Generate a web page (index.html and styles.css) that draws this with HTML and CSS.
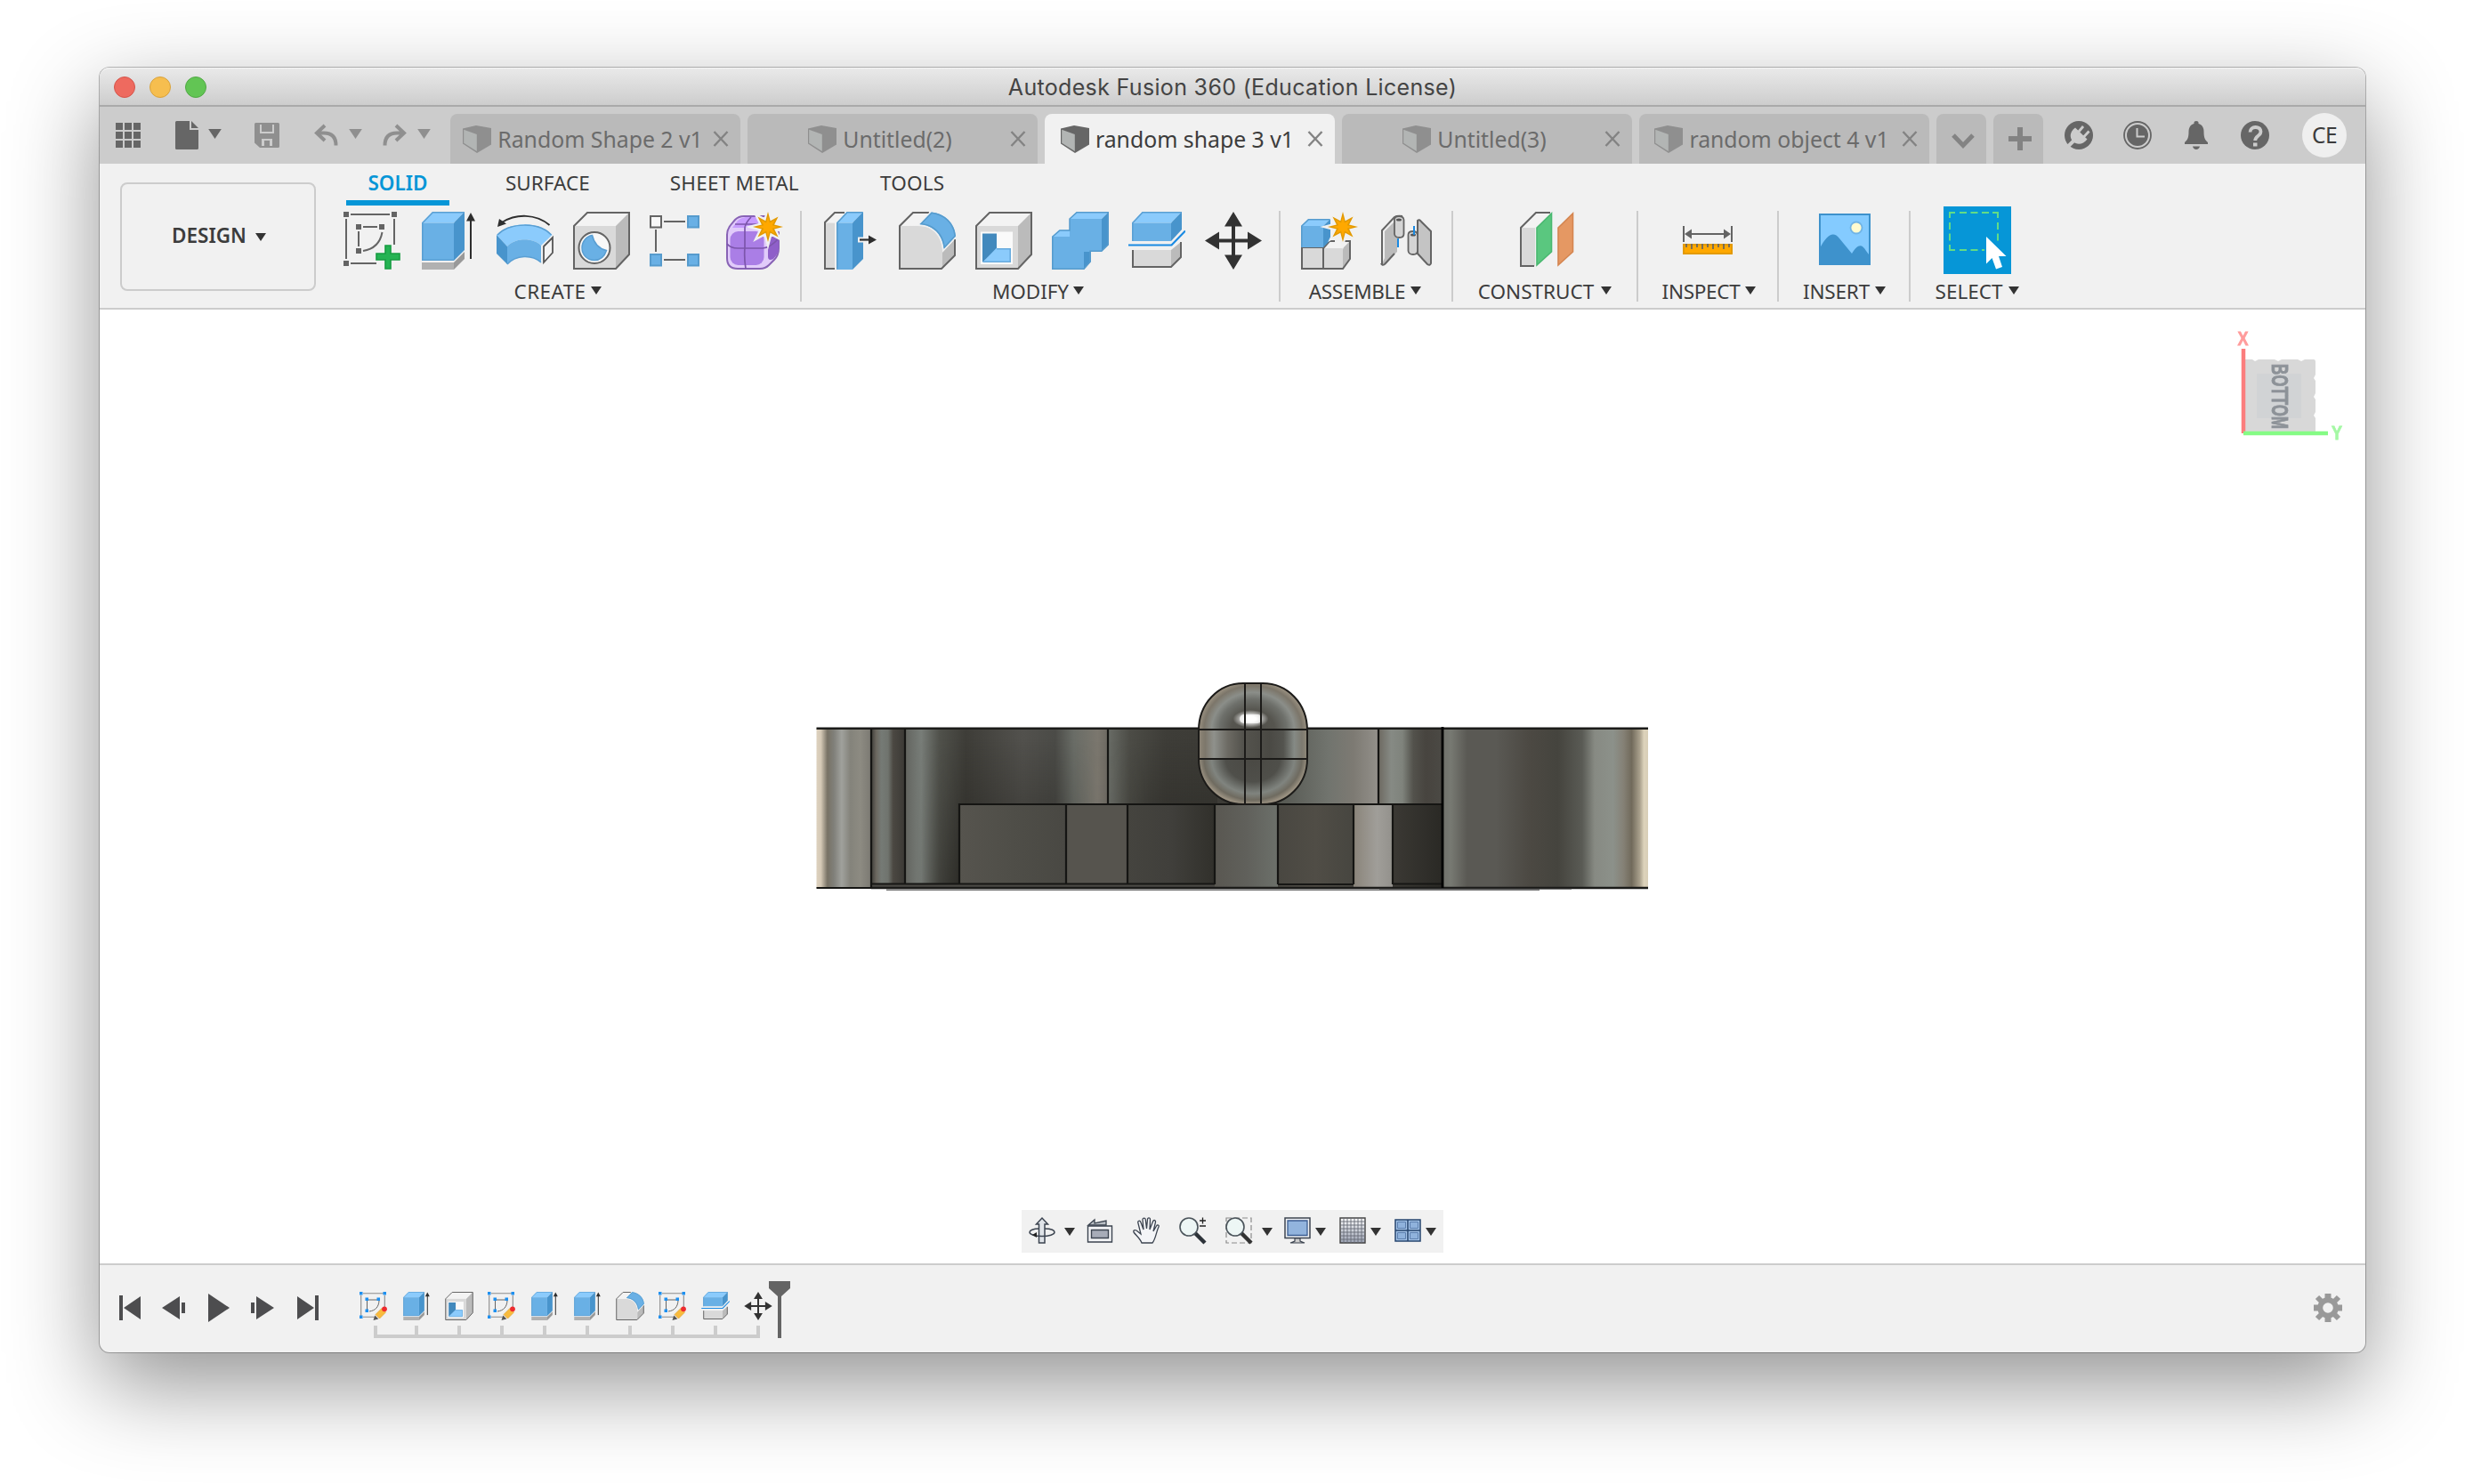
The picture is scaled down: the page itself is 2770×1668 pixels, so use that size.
FILE: index.html
```html
<!DOCTYPE html>
<html lang="en">
<head>
<meta charset="utf-8">
<title>Autodesk Fusion 360 (Education License)</title>
<link rel="stylesheet" href="styles.css">
</head>
<body>
<svg class="defs" width="0" height="0">
  <defs>
    <symbol id="caret" viewBox="0 0 12 9"><path d="M0 0h12L6 9z" fill="currentColor"/></symbol>
    <symbol id="doc-cube" viewBox="0 0 32 31">
      <path d="M0 3.500 15 0 32 3v18.500L16 31 0 20.500z" fill="currentColor"/>
      <path d="M1.200 4.800 15.800 10v19L1.200 19.800z" fill="#b2b5b4"/>
    </symbol>
    <symbol id="close" viewBox="0 0 18 18"><path d="M1.500 1 16.500 17M16.500 1 1.500 17" stroke="#838383" stroke-width="2.400" fill="none"/></symbol>
    <symbol id="extrude" viewBox="0 0 64 65">
      <path d="M2 57h36v8H2z" fill="#b1b1b1"/><path d="M38 57 50 45v8L38 65z" fill="#999"/>
      <path d="M2 12.500 14 0h36L38 12.500z" fill="#8bcbfc"/><path d="M38 12.500 50 0v43L38 55z" fill="#4894cc"/>
      <path d="M2 12.500h36V55H2z" fill="#69b0e5"/><path d="M2.800 55V12.500L14.300.8H50M2 54.200h36" fill="none" stroke="#5a9fd3" stroke-width="1.500"/>
      <path d="M57 7v46" stroke="#2e2e2e" stroke-width="2"/><path d="m57 1 5 9.500H52z" fill="#2e2e2e"/>
    </symbol>
    <symbol id="fillet" viewBox="0 0 64 65">
      <path d="M1 16 16 1h18L22 15z" fill="#f3f3f3"/><path d="M48 47 63 31v17L48 64z" fill="#bbb"/>
      <path d="M1 16h21c15 0 26 10 27 28v20H1z" fill="#d9d9d9"/>
      <path d="M34 1H16L1 16v48h47l15-15V31" fill="none" stroke="#646464" stroke-width="2"/>
      <path d="M23.500 14.300 36.500.5C52 2 63 13 64 27.500L50.500 41.500C49 25 38 15 23.500 14.300z" fill="#69b0e5" stroke="#f1f1f1" stroke-width="3" paint-order="stroke"/>
      <path d="M25 13.500 37 1.300C51 3 62 13 63.200 27.300L51.300 40C49 24 39 15 25 13.500z" fill="#69b0e5" stroke="#569bcd" stroke-width="1.500"/>
    </symbol>
    <symbol id="shell" viewBox="0 0 64 65">
      <path d="M1 16 16 1h47L48 16z" fill="#f3f3f3"/><path d="M48 16 63 1v47L48 64z" fill="#bbb"/><path d="M1 16h47v48H1z" fill="#d9d9d9"/>
      <path d="M1 16 16 1h47v47L48 64H1z" fill="none" stroke="#646464" stroke-width="2"/>
      <path d="M6 22.500h36V59H6z" fill="#fafafa"/><path d="M8 24.500h16v18L8 57z" fill="#4289bd"/>
      <path d="M8 57 23.500 41H40v16z" fill="#8bcbfc"/><path d="M9 56.200h30.200V41.800H24" fill="none" stroke="#67aadd" stroke-width="1.500"/>
    </symbol>
    <symbol id="split" viewBox="0 0 64 65">
      <path d="M4 12.500 15.500 0H60L48 12.500z" fill="#8bcbfc"/><path d="M48 12.500 60 0v20L48 33z" fill="#4894cc"/><path d="M4 12.500h44V33H4z" fill="#69b0e5"/>
      <path d="M4.800 33V12.500L16 .8h44" fill="none" stroke="#5a9fd3" stroke-width="1.500"/>
      <path d="M0 37.500h48.500L64 21.500" fill="none" stroke="#1a8ae2" stroke-width="2.200"/>
      <path d="M5 43h43v19H5z" fill="#d9d9d9"/><path d="m48 43 11-9v17L48 62z" fill="#bbb"/><path d="M5 43v19h43l11-11V34" fill="none" stroke="#646464" stroke-width="2"/>
    </symbol>
    <symbol id="move" viewBox="0 0 64 65">
      <path d="M32 10v46M10 32.500h44" stroke="#323232" stroke-width="4"/>
      <path d="m32 0 10 16.500H22zM32 65l10-16.500H22zM0 32.500l16-10v20zM64 32.500l-16-10v20z" fill="#323232"/>
    </symbol>
    <symbol id="star" viewBox="0 0 34 36" overflow="visible">
      <path id="burst" d="M17 1l2.700 10.200 8.900-4.800-4.500 9L34 18l-9.900 2.600 4.500 9-8.900-4.800L17 35l-2.700-10.200-8.900 4.800 4.500-9L0 18l9.900-2.600-4.500-9 8.900 4.800z" fill="#f1f1f1" stroke="#f1f1f1" stroke-width="4.500"/>
      <path d="M17 1l2.700 10.200 8.900-4.800-4.500 9L34 18l-9.900 2.600 4.500 9-8.900-4.800L17 35l-2.700-10.200-8.900 4.800 4.500-9L0 18l9.900-2.600-4.500-9 8.900 4.800z" fill="#e39a00"/>
      <path d="M17 6.500l1.900 7 5.900-3.300-3 6 6.700 1.800-6.700 1.800 3 6-5.900-3.300-1.900 7-1.900-7-5.900 3.300 3-6L5.500 18l6.700-1.800-3-6 5.900 3.300z" fill="#ffa800"/>
    </symbol>
    <symbol id="sketch-edit" viewBox="0 0 32 32">
      <path d="M4 1.700h24M1.700 4v24M28.300 4v14M4 28.300h13" stroke="#8c8c8c" stroke-width="1.100"/>
      <path d="M9 9h12M8.500 10v11M22 10c-.5 7-4 11-11 12" fill="none" stroke="#646464" stroke-width="1"/>
      <path d="M0 0h3.500v3.500H0zM26.500 0H30v3.500h-3.500zM0 26.500h3.500V30H0zM6.500 6.500H10V10H6.500zM19.500 6.500H23V10h-3.500zM6.500 19.500H10V23H6.500z" fill="#1e90f0"/>
      <path d="m15.500 32 1.800-5.500 4 4z" fill="#555"/><path d="m18 25.500 7-7 4.500 4.500-7 7z" fill="#f9bb3d" stroke="#e0a030" stroke-width=".7"/><circle cx="28" cy="19.300" r="2.900" fill="#ee2b2f"/>
    </symbol>
  </defs>
</svg>

<div class="window">
  <header class="titlebar">
    <div class="lights"><i class="red"></i><i class="yellow"></i><i class="green"></i></div>
    <span class="title">Autodesk Fusion 360 (Education License)</span>
  </header>

  <div class="tabbar">
    <div class="quick">
      <svg class="q-grid" viewBox="0 0 28 28"><path d="M0 0h8v8H0zM10 0h8v8h-8zM20 0h8v8h-8zM0 10h8v8H0zM10 10h8v8h-8zM20 10h8v8h-8zM0 20h8v8H0zM10 20h8v8h-8zM20 20h8v8h-8z" fill="#666"/></svg>
      <svg class="q-file" viewBox="0 0 26 32"><path d="M1.500 0H16v10h10v20.500a1.500 1.500 0 0 1-1.500 1.500h-23A1.500 1.500 0 0 1 0 30.500v-29A1.500 1.500 0 0 1 1.500 0zM18 0l8 8h-8z" fill="#666"/></svg>
      <svg class="q-caret dark"><use href="#caret"/></svg>
      <svg class="q-save" viewBox="0 0 28 28"><path fill-rule="evenodd" d="M1.500 0h25A1.500 1.500 0 0 1 28 1.500v25a1.500 1.500 0 0 1-1.500 1.500H6L0 22.500v-21A1.500 1.500 0 0 1 1.500 0zM6 2v10h16V2h-2v8H8V2zM8 18v8h3v-6h6v6h3v-8z" fill="#8f8f8f"/></svg>
      <svg class="q-undo" viewBox="0 0 27 24"><path d="M12 1 3 9.500 12 18M3 9.500h8c9 0 13.500 5 13.500 14" fill="none" stroke="#8f8f8f" stroke-width="4"/></svg>
      <svg class="q-caret"><use href="#caret"/></svg>
      <svg class="q-undo flip" viewBox="0 0 27 24"><path d="M12 1 3 9.500 12 18M3 9.500h8c9 0 13.500 5 13.500 14" fill="none" stroke="#8f8f8f" stroke-width="4"/></svg>
      <svg class="q-caret"><use href="#caret"/></svg>
    </div>
    <nav class="tabs">
      <div class="tab"><div class="tab-main"><svg class="tab-cube"><use href="#doc-cube"/></svg><span>Random Shape 2 v1</span></div><svg class="tab-x"><use href="#close"/></svg></div>
      <div class="tab"><div class="tab-main"><svg class="tab-cube"><use href="#doc-cube"/></svg><span>Untitled(2)</span></div><svg class="tab-x"><use href="#close"/></svg></div>
      <div class="tab active"><div class="tab-main"><svg class="tab-cube"><use href="#doc-cube"/></svg><span>random shape 3 v1</span></div><svg class="tab-x"><use href="#close"/></svg></div>
      <div class="tab"><div class="tab-main"><svg class="tab-cube"><use href="#doc-cube"/></svg><span>Untitled(3)</span></div><svg class="tab-x"><use href="#close"/></svg></div>
      <div class="tab"><div class="tab-main"><svg class="tab-cube"><use href="#doc-cube"/></svg><span>random object 4 v1</span></div><svg class="tab-x"><use href="#close"/></svg></div>
      <div class="tab small"><svg width="26" height="17" viewBox="0 0 26 17"><path d="m2 2 11 11.500L24 2" fill="none" stroke="#838383" stroke-width="5"/></svg></div>
      <div class="tab small plus"><svg width="26" height="26" viewBox="0 0 26 26"><path d="M13 0v26M0 13h26" stroke="#838383" stroke-width="6"/></svg></div>
    </nav>
    <div class="status">
      <svg width="32" height="32" viewBox="0 0 32 32"><circle cx="16" cy="16" r="16" fill="#666"/><path d="M12 7.500 25.500 20.500C21 26.500 14 27.500 9.500 23 5 18.500 6 12 12 7.500z" fill="#ccc"/><path d="m15.500 12.500 5.500-6.500M21.500 18l6-6.500" stroke="#ccc" stroke-width="2.800"/><path d="M10 22.500 3.500 29" stroke="#ccc" stroke-width="4"/></svg>
      <svg width="32" height="32" viewBox="0 0 32 32"><circle cx="16" cy="16" r="15" fill="none" stroke="#666" stroke-width="1.800"/><circle cx="16" cy="16" r="12" fill="#666"/><path d="M15.500 8v9.500H24" fill="none" stroke="#ccc" stroke-width="2"/></svg>
      <svg width="32" height="32" viewBox="0 0 32 32"><path d="M13.500 3V1.500Q13.500 0 16 0t2.500 1.500V3c4 1 6 4.500 6 9 0 7 1.500 9.500 4.500 12v2H3v-2c3-2.500 4.500-5 4.500-12 0-4.500 2-8 6-9zM12 28.500h8c-.5 2-2 3.500-4 3.500s-3.500-1.500-4-3.500z" fill="#666"/></svg>
      <svg width="32" height="32" viewBox="0 0 32 32"><circle cx="16" cy="16" r="16" fill="#666"/><path d="M10.500 12.500c0-7 12-7.500 12-.5 0 5-6.300 4.500-6.300 10" fill="none" stroke="#ccc" stroke-width="3.800"/><path d="M14 24.500h4.500V28.500H14z" fill="#ccc"/></svg>
    </div>
    <span class="avatar">CE</span>
  </div>

  <section class="ribbon">
    <div class="design"><span>DESIGN</span><svg class="caret"><use href="#caret"/></svg></div>
    <div class="ribbon-main">
      <nav class="modes"><span class="mode on">SOLID</span><span class="mode">SURFACE</span><span class="mode wide">SHEET METAL</span><span class="mode wide">TOOLS</span></nav>
      <div class="groups">
        <div class="group g-create">
          <div class="tools">
            <svg viewBox="0 0 64 65"><path d="M8 3h44M3 8v45M57 8v29M8 58h29M22 17h16M17 22v17" stroke="#646464" stroke-width="2"/><path d="M43.500 23c-2 11-9 19-21.500 21" fill="none" stroke="#646464" stroke-width="2"/><path d="M0 0h6v6H0zM54 0h6v6h-6zM0 55h6v6H0zM14 14h6v6h-6zM40 14h6v6h-6zM14 41h6v6h-6z" fill="#646464"/><path d="M47 38h6v9h10v7H53v10h-6V54H37v-7h10z" fill="#25b353" stroke="#179d42" stroke-width="1.600"/></svg>
            <svg><use href="#extrude"/></svg>
            <svg viewBox="0 0 64 65"><path d="M0 26C14 11 48 10 62.500 26L50 38c-9-9-29-9-38 1z" fill="#8bcbfc"/><path d="M0 26 12 39v20L0 47z" fill="#4894cc"/><path d="M12 39c9-10 29-10 38-1v19c-10-9-28-9-38 2z" fill="#69b0e5"/><path d="M1 26C14 12 48 11 61.500 26M12 59c10-11 28-11 38-2" fill="none" stroke="#5a9fd3" stroke-width="1.500"/><path d="M53 39 63 29v17L53 57z" fill="#f4f4f4" stroke="#555" stroke-width="1.800"/><path d="M59.500 15C44 2 22 2 6 12" fill="none" stroke="#2e2e2e" stroke-width="2"/><path d="M1 17 3 8l8 5.500z" fill="#2e2e2e"/></svg>
            <svg viewBox="0 0 64 65"><path d="M1 16 16 1h47L48 16z" fill="#f3f3f3"/><path d="M48 16 63 1v47L48 64z" fill="#bbb"/><path d="M1 16h47v48H1z" fill="#d9d9d9"/><path d="M1 16 16 1h47v47L48 64H1z" fill="none" stroke="#646464" stroke-width="2"/><circle cx="24" cy="40.500" r="17.500" fill="#f8f8f8" stroke="#646464" stroke-width="2"/><path d="M21.500 26.500c2 9 7 15 16 17C35 51 30 54.500 24 54.500c-8 0-14-6-14-14 0-7 5-13 11.500-14z" fill="#69b0e5" stroke="#5a9fd3" stroke-width="1.500"/></svg>
            <svg viewBox="0 0 64 65"><path d="M16 11h24M7 20v25M16 54h24" stroke="#646464" stroke-width="2"/><path d="M1 5h12v12.500H1z" fill="#f8f8f8" stroke="#646464" stroke-width="2"/><path d="M43 5h12v12.500H43zM1 48h12v12.500H1zM43 48h12v12.500H43z" fill="#69b0e5" stroke="#569bcd" stroke-width="2"/></svg>
            <svg viewBox="0 0 64 65"><path d="M1 26Q1 20 5 15l5-6q4-4 10-4h25q14 0 14 14v22q0 8-5 13l-6 6q-4 4-10 4H13Q1 64 1 52z" fill="#e1cbfa" stroke="#8863b5" stroke-width="2"/><path d="M7 18 13 10q3-3 9-4h18l-6 12z" fill="#c79bff"/><rect x="4.500" y="22" width="38" height="38" rx="9" fill="#aa7ee6"/><path d="M47 32q1-4 12-9v18q0 6-6 12-6 3-6-3z" fill="#8f5fc9"/><path d="M1 36q4 5 12 5h28q8 0 19-12M22 64q-2-12-1-24V18q1-6 7-12M10 14h28" fill="none" stroke="#7c55ab" stroke-width="1.700"/><path d="M44 0h20v24l-8-3z" fill="#f1f1f1"/><use href="#star" x="30" y="-1" width="34" height="36"/></svg>
          </div>
          <div class="label"><span>CREATE</span><svg class="caret"><use href="#caret"/></svg></div>
        </div>
        <div class="group g-modify">
          <div class="tools">
            <svg viewBox="0 0 64 65"><path d="M3 12.500h11V64H3z" fill="#d9d9d9"/><path d="M3 12 14 1h12L15 12.500z" fill="#f3f3f3"/><path d="M25 1H14L3 12v52h11" fill="none" stroke="#646464" stroke-width="2"/><path d="M16 12.500 27.500 0H46L34 12.500z" fill="#8bcbfc"/><path d="M34 12.500 46 0v53L34 65z" fill="#4894cc"/><path d="M16 12.500h18V65H16z" fill="#69b0e5"/><path d="M16.800 64.200V12.500L28 .8h17.500" fill="none" stroke="#569bcd" stroke-width="1.500"/><path d="M40 31.500h12" stroke="#f1f1f1" stroke-width="6"/><path d="M42 31.500h12" stroke="#2e2e2e" stroke-width="2.200"/><path d="m52 26.500 9 5-9 5z" fill="#2e2e2e"/></svg>
            <svg><use href="#fillet"/></svg>
            <svg><use href="#shell"/></svg>
            <svg viewBox="0 0 64 65"><path d="m0 28 8-7.500h14V28zM20 8l8-8h36l-8 8z" fill="#8bcbfc"/><path d="m56 8 8-8v37l-8 8zM36 45h8v11l-8 9z" fill="#4894cc"/><path d="M0 65V28h20V8h36v37H36v20z" fill="#69b0e5"/><path d="M.8 64.200V28L9 21h11V8l8-7.200h35.200V37l-7.700 7.200H43v12l-7 8z" fill="none" stroke="#569bcd" stroke-width="1.500"/></svg>
            <svg><use href="#split"/></svg>
            <svg><use href="#move"/></svg>
          </div>
          <div class="label"><span>MODIFY</span><svg class="caret"><use href="#caret"/></svg></div>
        </div>
        <div class="group g-assemble">
          <div class="tools">
            <svg viewBox="0 0 64 65"><path d="M1 40h24v24H1zM25 41h22v23H25z" fill="#d9d9d9"/><path d="m25 41 8-8h23l-9 8z" fill="#f3f3f3"/><path d="m47 41 8-8v20l-8 11z" fill="#bbb"/><path d="M1 40v24h46l8-11V33h-6M25 64V41l7-8h6M1 40h24" fill="none" stroke="#646464" stroke-width="2"/><path d="m0 16 8-8h25l-8 8z" fill="#8bcbfc"/><path d="m25 16 8-8v24l-8 8z" fill="#4894cc"/><path d="M0 16h25v24H0z" fill="#69b0e5"/><path d="M.8 40V16L8.500 8.800H32" fill="none" stroke="#569bcd" stroke-width="1.500"/><use href="#star" x="30" y="-1" width="34" height="36"/></svg>
            <svg viewBox="0 0 64 65"><path d="M5 59V21L19 6l3 3v36L8 59z" fill="#bbb"/><path d="M5 59V21L19 6q3-2 9-1" fill="#eee" stroke="#646464" stroke-width="2"/><path d="M8 22 19 11v35L8 58z" fill="#bbb"/><path d="M8 59 19 47M4 58q1 3 4 1" stroke="#646464" stroke-width="2" fill="none"/><path d="M19 9q0-4 5-4t5.500 4v16q0 4-5 4T19 25z" fill="#d4d4d4" stroke="#646464" stroke-width="1.800"/><ellipse cx="24" cy="9" rx="3" ry="1.500" fill="#555"/><path d="M23 30v10M41 16v8" stroke="#1a8ae2" stroke-width="2"/><path d="M45 10q2-2 4 1l11 11v36q-1 3-4 1L45 47z" fill="#c4c4c4" stroke="#646464" stroke-width="2"/><path d="M34.500 26q0-4 5-4t5.500 4v18q0 4-5 4t-5.500-4z" fill="#d4d4d4" stroke="#646464" stroke-width="1.800"/><ellipse cx="40" cy="26" rx="3" ry="1.500" fill="#555"/><path d="M41 16v10" stroke="#1a8ae2" stroke-width="2"/></svg>
          </div>
          <div class="label"><span>ASSEMBLE</span><svg class="caret"><use href="#caret"/></svg></div>
        </div>
        <div class="group g-construct">
          <div class="tools">
            <svg viewBox="0 0 64 65"><path d="M5 18h16v43H5z" fill="#d9d9d9"/><path d="M5 18 22 1h17L21 18z" fill="#f3f3f3"/><path d="M38 1H22L5 18v43h15" fill="none" stroke="#646464" stroke-width="2"/><path d="M23 18 39.500 2v43L23 60z" fill="#5ac77f" stroke="#49b870" stroke-width="1.600"/><path d="M47 18 63.500 2v43L47 60z" fill="#e59863" stroke="#d48550" stroke-width="1.600"/></svg>
          </div>
          <div class="label"><span>CONSTRUCT</span><svg class="caret"><use href="#caret"/></svg></div>
        </div>
        <div class="group g-inspect">
          <div class="tools">
            <svg viewBox="0 0 64 65"><path d="M5 16v18M59 16v18M8 25h48" stroke="#646464" stroke-width="2"/><path d="m6 25 8-5.500v11zM58 25l-8-5.500v11z" fill="#646464"/><path d="M5 37h54v10H5z" fill="#ffa800" stroke="#e39a00" stroke-width="2"/><path d="M8 36v4M14 36v6M20 36v4M26 36v6M32 36v4M38 36v6M44 36v4M50 36v6M56 36v4" stroke="#646464" stroke-width="1.700"/></svg>
          </div>
          <div class="label"><span>INSPECT</span><svg class="caret"><use href="#caret"/></svg></div>
        </div>
        <div class="group g-insert">
          <div class="tools">
            <svg viewBox="0 0 64 65"><path d="M5 3h56v56H5z" fill="#84cbff"/><circle cx="46" cy="18" r="6.500" fill="#fffbd0" stroke="#70b4e6" stroke-width="1.800"/><path d="M5 41c8-15 15-20 22-11l14 17c6-10 11-12 16-3l3 4v11H5z" fill="#3e92cc"/><path d="M5 3h56v56H5z" fill="none" stroke="#3e92cc" stroke-width="2"/></svg>
          </div>
          <div class="label"><span>INSERT</span><svg class="caret"><use href="#caret"/></svg></div>
        </div>
        <div class="group g-select">
          <div class="tools">
            <svg class="select-icon" viewBox="0 0 76 76"><path d="M0 0h76v76H0z" fill="#0696d7"/><path d="M7 13V7h6M55 7h6v6M7 43v6h6M18 7h8M30.500 7h8M43 7h8M7 18v8M7 30.500v8M61 18v8M61 30.500v8M18 49h8M30.500 49h8M43 49h3" fill="none" stroke="#62dc85" stroke-width="2"/><path d="m48 34 22.500 22H62l4 12-7 2.500L54.500 58 48 64.500z" fill="#fff"/></svg>
          </div>
          <div class="label"><span>SELECT</span><svg class="caret"><use href="#caret"/></svg></div>
        </div>
      </div>
    </div>
  </section>

  <main class="viewport">
    <svg class="model" width="940" height="244" viewBox="915 762 940 244">
      <defs>
        <linearGradient id="m1"><stop offset="0" stop-color="#ded2bf"/><stop offset=".08" stop-color="#d5c9b6"/><stop offset=".2" stop-color="#787265"/><stop offset=".32" stop-color="#80807a"/><stop offset=".46" stop-color="#a0a19c"/><stop offset=".62" stop-color="#84837b"/><stop offset=".8" stop-color="#8d8b82"/><stop offset="1" stop-color="#7b7972"/></linearGradient>
        <linearGradient id="m2"><stop offset="0" stop-color="#3d3c38"/><stop offset=".15" stop-color="#6b675f"/><stop offset=".3" stop-color="#757a75"/><stop offset=".5" stop-color="#70746e"/><stop offset=".65" stop-color="#4b4842"/><stop offset="1" stop-color="#3b3935"/></linearGradient>
        <linearGradient id="m3"><stop offset="0" stop-color="#62645f"/><stop offset=".08" stop-color="#787d78"/><stop offset=".17" stop-color="#50514b"/><stop offset=".3" stop-color="#3e3d38"/><stop offset=".58" stop-color="#52514d"/><stop offset=".74" stop-color="#4b4b47"/><stop offset=".83" stop-color="#696c66"/><stop offset=".95" stop-color="#7b776e"/><stop offset="1" stop-color="#6d6962"/></linearGradient>
        <linearGradient id="m4"><stop offset="0" stop-color="#696c66"/><stop offset=".15" stop-color="#4c4c46"/><stop offset=".4" stop-color="#3e3d38"/><stop offset="1" stop-color="#3b3a35"/></linearGradient>
        <linearGradient id="m5"><stop offset=".2" stop-color="#555751"/><stop offset=".6" stop-color="#71746e"/><stop offset=".8" stop-color="#7d7a73"/><stop offset="1" stop-color="#93908a"/></linearGradient>
        <linearGradient id="m6"><stop offset="0" stop-color="#6d6961"/><stop offset=".2" stop-color="#868a84"/><stop offset=".38" stop-color="#7f837c"/><stop offset=".55" stop-color="#53524c"/><stop offset=".75" stop-color="#47443f"/><stop offset="1" stop-color="#4b4944"/></linearGradient>
        <linearGradient id="m7"><stop offset="0" stop-color="#70716b"/><stop offset=".04" stop-color="#777972"/><stop offset=".12" stop-color="#5a5954"/><stop offset=".26" stop-color="#5a5954"/><stop offset=".42" stop-color="#4c4943"/><stop offset=".56" stop-color="#45443e"/><stop offset=".68" stop-color="#5a5b55"/><stop offset=".74" stop-color="#878a83"/><stop offset=".83" stop-color="#8c918a"/><stop offset=".88" stop-color="#858176"/><stop offset=".92" stop-color="#716a5b"/><stop offset=".96" stop-color="#aaa18d"/><stop offset=".98" stop-color="#ddd3bb"/><stop offset="1" stop-color="#d8ceb7"/></linearGradient>
        <linearGradient id="fade" x2="0" y2="1"><stop offset="0" stop-color="#1e1d19" stop-opacity="0"/><stop offset="1" stop-color="#1e1d19" stop-opacity=".6"/></linearGradient>
        <linearGradient id="spread" gradientUnits="userSpaceOnUse" x1="1030" x2="1365" y1="0" y2="0"><stop offset="0" stop-color="#000"/><stop offset=".15" stop-color="#fff"/><stop offset=".45" stop-color="#fff"/><stop offset=".6" stop-color="#222"/><stop offset=".66" stop-color="#222"/><stop offset=".78" stop-color="#fff"/></linearGradient>
        <mask id="fadeMask"><path d="M1030 819h338v180h-338z" fill="url(#spread)"/></mask>
        <linearGradient id="b1"><stop offset="0" stop-color="#56544e"/><stop offset=".5" stop-color="#4f4e48"/><stop offset="1" stop-color="#494843"/></linearGradient>
        <linearGradient id="b3"><stop offset="0" stop-color="#45443f"/><stop offset=".5" stop-color="#403f3b"/><stop offset="1" stop-color="#31302b"/></linearGradient>
        <linearGradient id="b4"><stop offset="0" stop-color="#595751"/><stop offset=".5" stop-color="#60605b"/><stop offset="1" stop-color="#6c706a"/></linearGradient>
        <linearGradient id="b5"><stop offset="0" stop-color="#494741"/><stop offset=".5" stop-color="#504d46"/><stop offset="1" stop-color="#474640"/></linearGradient>
        <linearGradient id="b6"><stop offset="0" stop-color="#8a847a"/><stop offset=".6" stop-color="#a09e99"/><stop offset="1" stop-color="#93918c"/></linearGradient>
        <linearGradient id="b7"><stop offset="0" stop-color="#3b3934"/><stop offset="1" stop-color="#2a2925"/></linearGradient>
        <linearGradient id="cap"><stop offset="0" stop-color="#8f8778"/><stop offset=".06" stop-color="#7d776b"/><stop offset=".14" stop-color="#8f918c"/><stop offset=".27" stop-color="#6c6a63"/><stop offset=".4" stop-color="#55544e"/><stop offset=".65" stop-color="#4a4944"/><stop offset=".78" stop-color="#53534e"/><stop offset=".88" stop-color="#858a85"/><stop offset=".95" stop-color="#7d7a70"/><stop offset="1" stop-color="#8f8879"/></linearGradient>
        <radialGradient id="topEnd" gradientUnits="userSpaceOnUse" cx="1408" cy="820" r="61" gradientTransform="translate(0 82) scale(1 .9)"><stop offset="0" stop-color="#4f4e49"/><stop offset=".4" stop-color="#56554f"/><stop offset=".62" stop-color="#6e706b"/><stop offset=".76" stop-color="#8b8e89"/><stop offset=".9" stop-color="#7c766a"/><stop offset="1" stop-color="#999080"/></radialGradient>
        <radialGradient id="botEnd" gradientUnits="userSpaceOnUse" cx="1408" cy="853" r="61" gradientTransform="translate(0 136.500) scale(1 .84)"><stop offset="0" stop-color="#4a4944"/><stop offset=".5" stop-color="#4f4f4a"/><stop offset=".76" stop-color="#80847f"/><stop offset=".9" stop-color="#6f6b60"/><stop offset="1" stop-color="#999080"/></radialGradient>
        <radialGradient id="glow"><stop offset=".3" stop-color="#fff"/><stop offset="1" stop-color="#fff" stop-opacity="0"/></radialGradient>
      </defs>
      <path d="M917.500 819H979v179h-61.500z" fill="url(#m1)"/>
      <path d="M979 819h38v179h-38z" fill="url(#m2)"/>
      <path d="M1017 819h228v179h-228z" fill="url(#m3)"/>
      <path d="M1245 819h163v86h-163z" fill="url(#m4)"/>
      <path d="M1030 830h338v75h-338zM1030 905h48v90h-48z" fill="url(#fade)" mask="url(#fadeMask)"/>
      <path d="M1408 819h141v86h-141z" fill="url(#m5)"/>
      <path d="M1549 819h71v86h-71z" fill="url(#m6)"/>
      <path d="M1078 904h120v94h-120z" fill="url(#b1)"/>
      <path d="M1198 904h69v94h-69z" fill="#56544e"/>
      <path d="M1267 904h98v94h-98z" fill="url(#b3)"/>
      <path d="M1365 904h71v94h-71z" fill="url(#b4)"/>
      <path d="M1436 904h85v94h-85z" fill="url(#b5)"/>
      <path d="M1521 904h44v94h-44z" fill="url(#b6)"/>
      <path d="M1565 904h56v94h-56z" fill="url(#b7)"/>
      <path d="M979 994h386v4H979z" fill="#4a4944"/>
      <path d="M1621 818h231v180h-231z" fill="url(#m7)"/>
      <path d="M917.500 818.800H1852M979 998h873" fill="none" stroke="#1b1b19" stroke-width="2.600"/>
      <path d="M917.500 998H979M979 819v179M1017 819v175M1245 819v85M1078 994v-90h542M1198 904v90M1267 904v90M1365 904v90M1436 904v90M1521 904v90M1565 904v90M1549 819v85" fill="none" stroke="#151513" stroke-width="2.200"/>
      <path d="M979 993.500h386M1436 994h85M1565 993.500h56" stroke="#171715" stroke-width="1.800"/>
      <path d="M996 1000.200h734M1550 999h216" stroke="#333" stroke-width="1"/>
      <path d="M1621 817v181" stroke="#000" stroke-width="2.800"/>
      <path d="M1347 821c0-30 22-53 50-53h22c28 0 50 23 50 53z" fill="url(#topEnd)"/>
      <path d="M1347 853h122c0 28-22 51-50 51h-22c-28 0-50-23-50-51z" fill="url(#botEnd)"/>
      <path d="M1347 820h122v33h-122z" fill="url(#cap)"/>
      <ellipse cx="1405.500" cy="808" rx="20" ry="10" fill="url(#glow)"/><rect x="1393" y="803" width="25" height="10" rx="5" fill="#fff" opacity=".7"/>
      <path d="M1399 768v136M1417 768v136M1347 820h122M1347 853h122" stroke="#1c1b19" stroke-width="2"/>
      <path d="M1347 821c0-30 22-53 50-53h22c28 0 50 23 50 53v32c0 28-22 51-50 51h-22c-28 0-50-23-50-51z" fill="none" stroke="#1c1b19" stroke-width="2"/>
    </svg>

    <svg class="viewcube" width="124" height="124" viewBox="2511 370 124 124">
      <path d="M2523 404h8l3 2 4-2h18l4 2 4-2h18l4 2 4-2h10q2 0 2 3v14l-2 4 2 3v14l-2 4 2 3v14l-2 4 2 3v15l-2 3h-77z" fill="#d8d8d8"/>
      <path d="M2536 420h50v50h-50z" fill="#d1d3d5"/>
      <path d="M2521 392v95" stroke="#fb7d7d" stroke-width="4.500"/><path d="M2521 487h95" stroke="#85fb85" stroke-width="4.500"/>
      <text x="2514.500" y="388" fill="#ff9c9c" stroke="#ff9c9c" textLength="12" lengthAdjust="spacingAndGlyphs" class="axis">X</text>
      <text x="2620" y="494" fill="#a5f8a5" stroke="#a5f8a5" textLength="12" lengthAdjust="spacingAndGlyphs" class="axis">Y</text>
      <text transform="translate(2552.500 409) rotate(90)" textLength="73" lengthAdjust="spacingAndGlyphs" class="face">BOTTOM</text>
    </svg>

    <div class="navbar">
      <svg class="n30" viewBox="0 0 30 30"><path d="M11.500 29V8H8.500L15 1l6.500 7H18v21z" fill="#dfe3e8" stroke="#3c4450" stroke-width="1.500"/><path d="M18 13c6 0 11 1.500 11 4s-6 4.500-14 4.500-14-2-14-4.500c0-2 4-4 10.500-4" fill="none" stroke="#3c4450" stroke-width="1.500"/><path d="m4 20 5-3v6z" fill="#222"/></svg>
      <svg class="caret ca"><use href="#caret"/></svg>
      <svg class="n30 look" viewBox="0 0 30 30"><path d="m2 9 7-6v4l13-3v5z" fill="#b9bec4" stroke="#3c4450" stroke-width="1.300"/><path d="M1.500 10h27v18h-27z" fill="#f2f3f5" stroke="#3c4450" stroke-width="1.400"/><path d="M5.500 14.500h19v9h-19z" fill="#a7acb8" stroke="#3c4450" stroke-width="1.400"/></svg>
      <svg class="n30 hand" viewBox="0 0 30 30"><path d="M10 29C8 24 4 21 1 17c-1-2 1-3 3-2l5 4L6 7c-1-3 2-4 3-1l3 8-1-11c0-2.500 3-2.500 3.300 0L15.500 13 16.500 2.500c.2-2.500 3.200-2 3 .3L19 14l3.500-9c1-2.500 3.500-1.500 3 .7L23 16l3.500-6c1.200-2 3.500-1 2.500 1-3 6-3 13-7 18z" fill="#f4f5f8" stroke="#3c4450" stroke-width="1.300"/></svg>
      <svg class="n30 zoom" viewBox="0 0 30 30"><path d="m18 18 11 11" stroke="#2d3339" stroke-width="4.500"/><circle cx="11" cy="11" r="10" fill="#edf6f5" stroke="#4b545b" stroke-width="1.600"/><path d="M23 4h7M26.500.5v7M23 10h7" stroke="#222" stroke-width="1.300"/></svg>
      <svg class="n30 zwin" viewBox="0 0 30 30"><path d="M1 1h28v28H1z" fill="none" stroke="#8c8c8c" stroke-width="1.200" stroke-dasharray="6 3"/><path d="m18 18 11 11" stroke="#333" stroke-width="4.500"/><circle cx="11" cy="11" r="10" fill="#edf6f5" stroke="#4b545b" stroke-width="1.600"/></svg>
      <svg class="caret cb"><use href="#caret"/></svg>
      <svg class="n30 disp" viewBox="0 0 30 30"><path d="M1 1h28v22.500H1z" fill="#f1f3f5" stroke="#3c4450" stroke-width="1.500"/><path d="M4 4h22v16.500H4z" fill="#92b4dd" stroke="#3c5e92" stroke-width="1.300"/><path d="M12 24h6v3l5 2H7l5-2z" fill="#ccc" stroke="#3c4450" stroke-width="1.200"/></svg>
      <svg class="caret cc"><use href="#caret"/></svg>
      <svg class="n30 grid" viewBox="0 0 30 30"><defs><linearGradient id="gg" x2="0" y2="1"><stop offset="0" stop-color="#fff"/><stop offset="1" stop-color="#9ba2b3"/></linearGradient></defs><path d="M1 1h28v28H1z" fill="url(#gg)" stroke="#444" stroke-width="1.400"/><path d="M5 1v28M9 1v28M13 1v28M17 1v28M21 1v28M25 1v28M1 5h28M1 9h28M1 13h28M1 17h28M1 21h28M1 25h28" stroke="#666b77" stroke-width=".9"/></svg>
      <svg class="caret cd"><use href="#caret"/></svg>
      <svg class="n30 views" viewBox="0 0 30 30"><path d="M1 3h28v24H1zM15 3v24M1 15h28" fill="#a3c2e6" stroke="#27466f" stroke-width="1.500"/><path d="M3.500 5.500h9v7h-9zM17.500 5.500h9v7h-9zM3.500 17.500h9v7h-9zM17.500 17.500h9v7h-9z" fill="#8fb2dc" stroke="#5c7fae" stroke-width="1"/></svg>
      <svg class="caret ce"><use href="#caret"/></svg>
    </div>
  </main>

  <footer class="timeline">
    <div class="playback">
      <svg viewBox="0 0 24 32"><path d="M0 2h4v28H0zM5 16 24 3v26z" fill="#4d4d4f"/></svg>
      <svg viewBox="0 0 26 32"><path d="M0 16 20 3v26zM22 10h4v12h-4z" fill="#4d4d4f"/></svg>
      <svg viewBox="0 0 24 32"><path d="m0 0 24 16L0 32z" fill="#4d4d4f"/></svg>
      <svg viewBox="0 0 26 32"><path d="M26 16 6 3v26zM0 10h4v12H0z" fill="#4d4d4f"/></svg>
      <svg viewBox="0 0 24 32"><path d="M24 2h-4v28h4zM19 16 0 3v26z" fill="#4d4d4f"/></svg>
    </div>
    <div class="features">
      <div class="feature"><svg><use href="#sketch-edit"/></svg></div>
      <div class="feature"><svg><use href="#extrude"/></svg></div>
      <div class="feature"><svg><use href="#shell"/></svg></div>
      <div class="feature"><svg><use href="#sketch-edit"/></svg></div>
      <div class="feature"><svg><use href="#extrude"/></svg></div>
      <div class="feature"><svg><use href="#extrude"/></svg></div>
      <div class="feature"><svg><use href="#fillet"/></svg></div>
      <div class="feature"><svg><use href="#sketch-edit"/></svg></div>
      <div class="feature"><svg><use href="#split"/></svg></div>
      <div class="feature"><svg><use href="#move"/></svg></div>
    </div>
    <svg class="marker" viewBox="0 0 24 64"><path d="M0 0h24v8L14 17v47h-4V17L0 8z" fill="#646464"/></svg>
    <svg class="gear" viewBox="-16 -16 32 32"><g fill="none" stroke="#999"><circle r="8.800" stroke-width="6"/><path d="M0-16v6M0 10v6M-16 0h6M10 0h6" stroke-width="7"/><path d="m-12-12 5 5M12-12 7-7M-12 12l5-5M12 12 7 7" stroke-width="6"/></g></svg>
  </footer>
</div>
</body>
</html>
```
FILE: styles.css
```css
* { box-sizing: border-box; }
body {
  margin: 0;
  height: 1668px;
  overflow: hidden;
  background: #fff;
  color: #3c3c3c;
  font-family: "Noto Sans", "Open Sans", sans-serif;
}
svg { display: block; flex: none; overflow: visible; }
.defs { position: absolute; }

.window {
  width: 2546px;
  height: 1444px;
  margin: 76px auto 0;
  display: flex;
  flex-direction: column;
  border-radius: 11px;
  background: #f1f1f1;
  box-shadow: 0 0 0 1px rgba(0, 0, 0, .26), 0 36px 100px rgba(0, 0, 0, .43);
}

/* title bar */
.titlebar {
  height: 44px;
  position: relative;
  display: flex;
  align-items: center;
  justify-content: center;
  border-radius: 11px 11px 0 0;
  background: linear-gradient(#e9e9e9, #cdcdcd);
  border-top: 1px solid #f4f4f4;
  border-bottom: 2px solid #aaa;
}
.title {
  font: 25px/44px Inter, sans-serif;
  color: #444;
  letter-spacing: .33px;
  padding-top: 1px;
}
.lights { position: absolute; left: 16px; top: 9px; display: flex; gap: 16px; }
.lights i { width: 24px; height: 24px; border-radius: 50%; border: 1px solid; }
.red { background: #ee6a5f; border-color: #d5544a !important; }
.yellow { background: #f6be4f; border-color: #d9a23b !important; }
.green { background: #62c554; border-color: #50a844 !important; }

/* tab bar */
.tabbar { height: 64px; display: flex; background: #ccc; }
.quick { width: 394px; height: 64px; padding-left: 18px; display: flex; align-items: center; }
.q-grid { width: 28px; height: 28px; }
.q-file { width: 26px; height: 32px; margin-left: 39px; }
.q-caret { width: 15px; height: 11px; color: #8f8f8f; margin: 0 0 4px 12px; }
.q-caret.dark { color: #666; margin-left: 11px; }
.q-save { width: 28px; height: 28px; margin-left: 37px; }
.q-undo { width: 27px; height: 24px; margin-left: 39px; }
.q-undo.flip { transform: scaleX(-1); margin-left: 23px; }
.tabs { display: flex; gap: 8px; align-items: flex-end; }
.tab {
  width: 326px;
  height: 56px;
  display: flex;
  align-items: center;
  border-radius: 8px 8px 0 0;
  background: #bababa;
  color: #6b6b6b;
  font-size: 24.8px;
}
.tab-main { width: 295px; margin-right: auto; padding-left: 3px; display: flex; justify-content: center; align-items: center; gap: 7px; white-space: nowrap; }
.tab-cube { width: 32px; height: 31px; color: #8f8f8f; }
.tab-x { width: 18px; height: 18px; margin-right: 13px; }
.tab.active { background: #f1f1f1; color: #3c3c3c; }
.active .tab-cube { color: #666; }
.tab.small { width: 56px; justify-content: center; padding-left: 4px; padding-top: 4px; }
.tab.plus { padding-top: 0; }
.status { display: flex; align-items: center; gap: 34px; margin-left: 24px; }
.avatar {
  width: 50px;
  height: 50px;
  margin: 7px 0 0 37px;
  border-radius: 50%;
  background: #efefef;
  text-align: center;
  font-size: 24.5px;
  line-height: 49px;
  letter-spacing: -.5px;
}

/* ribbon */
.ribbon { height: 164px; display: flex; border-bottom: 2px solid #ccc; }
.design {
  width: 220px;
  height: 122px;
  margin: 21px 0 0 23px;
  padding-left: 2px;
  display: flex;
  align-items: center;
  justify-content: center;
  gap: 10px;
  border: 2px solid #ccc;
  border-radius: 8px;
  font-size: 22.5px;
  font-weight: 600;
}
.design span { margin-top: -3px; }
.caret { width: 12px; height: 9px; color: #333; }
.ribbon-main { margin-left: 17px; }
.modes { height: 48px; display: flex; padding-left: 17px; font-size: 22.5px; }
.mode { height: 47px; line-height: 44px; text-align: center; white-space: nowrap; margin-right: 63px; }
.mode.wide { margin: 0 64px 0 27px; letter-spacing: .25px; }
.mode.on { width: 116px; color: #0696d7; font-weight: 600; border-bottom: 6px solid #0696d7; }
.groups { display: flex; }
.group { height: 108px; position: relative; display: flex; flex-direction: column; align-items: center; }
.group + .group { border-left: 2px solid #ccc; height: 102px; margin-top: 5px; }
.tools { display: flex; gap: 22px; height: 65px; margin-top: 6px; }
.group + .group .tools { margin-top: 1px; }
.tools svg { width: 64px; height: 65px; }
.label { display: flex; align-items: center; gap: 6px; height: 30px; margin-top: 10px; font-size: 22.5px; }
.label span { line-height: 30px; }
.label .caret { margin-top: -4px; }
.g-create { width: 527px; padding-right: 5px; }
.g-create .label { margin-right: 12px; gap: 6px; letter-spacing: .4px; }
.g-modify { width: 538px; padding-left: 4px; }
.g-modify .label { margin-right: 9px; gap: 5px; letter-spacing: -.1px; }
.g-assemble { width: 194px; padding-left: 4px; }
.g-assemble .label { margin-right: 6px; letter-spacing: -.3px; }
.g-construct { width: 208px; }
.g-construct .label { gap: 8px; }
.g-inspect { width: 158px; }
.g-inspect .label { padding-left: 3px; letter-spacing: -.3px; }
.g-insert { width: 148px; }
.g-insert .label { padding-left: 1px; letter-spacing: -.2px; }
.g-select { width: 152px; }
.g-select .label { gap: 7px; }
.tools .select-icon { width: 76px; height: 76px; margin-top: -6px; }

/* viewport */
.viewport { position: relative; flex: 1; background: #fff; }
.model { position: absolute; left: 803px; top: 414px; }
.viewcube { position: absolute; left: 2399px; top: 22px; filter: blur(.6px); }
.axis { font: bold 22.5px "Liberation Sans", sans-serif; stroke-width: .8px; }
.face { font: bold 25px "Liberation Sans", sans-serif; fill: #8d9298; stroke: #8d9298; stroke-width: .9px; }
.navbar {
  position: absolute;
  left: 1036px;
  bottom: 12px;
  width: 474px;
  height: 48px;
  padding-left: 8px;
  display: flex;
  align-items: center;
  background: #f1f1f1;
}
.n30 { width: 30px; height: 30px; margin-top: -2px; }
.ca { margin-left: 10px; }
.look { margin-left: 13px; }
.hand { margin-left: 22px; }
.zoom { margin-left: 22px; }
.zwin { margin-left: 22px; }
.cb { margin-left: 11px; }
.disp { margin-left: 13px; }
.cc { margin-left: 5px; }
.grid { margin-left: 15px; }
.cd { margin-left: 5px; }
.views { margin-left: 15px; }
.ce { margin-left: 5px; }

/* timeline */
.timeline { height: 100px; display: flex; align-items: flex-start; border-top: 2px solid #ccc; }
.playback { display: flex; width: 292px; padding: 32px 0 0 22px; gap: 24px; }
.playback svg { height: 32px; }
.playback svg:nth-child(odd) { width: 24px; }
.playback svg:nth-child(even) { width: 26px; margin-right: 2px; }
.features { display: flex; padding-top: 30px; }
.feature { width: 48px; height: 52px; background: linear-gradient(#ccc, #ccc) 14px 38px / 4px 10px no-repeat, linear-gradient(#ccc, #ccc) 0 48px / 48px 4px no-repeat; }
.feature svg { width: 32px; height: 32px; }
.feature:first-child { background: linear-gradient(#ccc, #ccc) 16px 38px / 4px 10px no-repeat, linear-gradient(#ccc, #ccc) 16px 48px / 32px 4px no-repeat; }
.feature:last-child { background: linear-gradient(#ccc, #ccc) 14px 38px / 4px 10px no-repeat, linear-gradient(#ccc, #ccc) 0 48px / 18px 4px no-repeat; }
.marker { width: 24px; height: 64px; margin: 18px 0 0 -20px; }
.gear { width: 32px; height: 32px; margin: 32px 26px 0 auto; }
```
